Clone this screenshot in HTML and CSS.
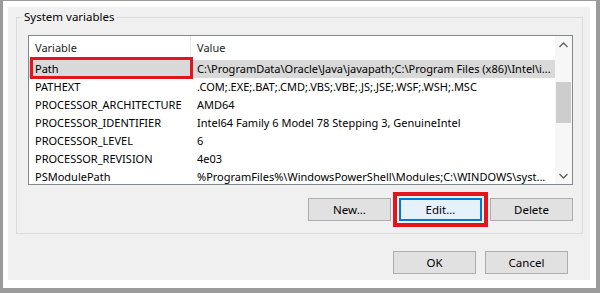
FILE: index.html
```html
<!DOCTYPE html>
<html>
  <head>
    <title>Environment Variables</title>
    <link rel="stylesheet" href="styles.css">
  </head>
  <body>
    <div class="frame">
      <div class="dialog">
        <fieldset class="group">
          <legend>System variables</legend>
          <div class="listbox">
            <div class="list">
              <div class="row head">
                <span class="cell name">Variable</span>
                <span class="cell value">Value</span>
              </div>
              <div class="row selected">
                <span class="cell name marked">Path</span>
                <span class="cell value">C:\ProgramData\Oracle\Java\javapath;C:\Program Files (x86)\Intel\i...</span>
              </div>
              <div class="row">
                <span class="cell name">PATHEXT</span>
                <span class="cell value">.COM;.EXE;.BAT;.CMD;.VBS;.VBE;.JS;.JSE;.WSF;.WSH;.MSC</span>
              </div>
              <div class="row">
                <span class="cell name">PROCESSOR_ARCHITECTURE</span>
                <span class="cell value">AMD64</span>
              </div>
              <div class="row">
                <span class="cell name">PROCESSOR_IDENTIFIER</span>
                <span class="cell value">Intel64 Family 6 Model 78 Stepping 3, GenuineIntel</span>
              </div>
              <div class="row">
                <span class="cell name">PROCESSOR_LEVEL</span>
                <span class="cell value">6</span>
              </div>
              <div class="row">
                <span class="cell name">PROCESSOR_REVISION</span>
                <span class="cell value">4e03</span>
              </div>
              <div class="row">
                <span class="cell name">PSModulePath</span>
                <span class="cell value">%ProgramFiles%\WindowsPowerShell\Modules;C:\WINDOWS\syst...</span>
              </div>
            </div>
            <div class="scrollbar">
              <span class="arrow">
                <svg width="9" height="6" viewBox="0 0 9 6"><path d="M0.5 5 L4.5 1 L8.5 5" fill="none" stroke="#606060" stroke-width="1.3"/></svg>
              </span>
              <span class="track"><span class="thumb"></span></span>
              <span class="arrow">
                <svg width="9" height="6" viewBox="0 0 9 6"><path d="M0.5 1 L4.5 5 L8.5 1" fill="none" stroke="#606060" stroke-width="1.3"/></svg>
              </span>
            </div>
          </div>
          <div class="buttons">
            <button class="btn">New...</button>
            <button class="btn default">Edit...</button>
            <button class="btn">Delete</button>
          </div>
        </fieldset>
        <div class="buttons footer">
          <button class="btn">OK</button>
          <button class="btn">Cancel</button>
        </div>
      </div>
    </div>
  </body>
</html>
```

FILE: styles.css
```css
* {
  box-sizing: border-box;
}

html,
body {
  margin: 0;
  height: 293px;
  overflow: hidden;
}

body {
  background-color: #9b9b9b;
  padding: 1px 4px 5px 3px;
  font-family: "Noto Sans", "Open Sans", sans-serif;
  font-size: 11px;
  color: #000;
}

.frame {
  height: 287px;
  background-color: #fff;
  padding: 6px 6px 8px 5px;
}

.dialog {
  height: 273px;
  background-color: #f0f0f0;
  padding-top: 2px;
}

.group {
  margin: 0 7px 0 8px;
  padding: 10px 9px 12px 11px;
  border: 1px solid #dcdcdc;
  min-width: 0;
}

.group legend {
  margin-left: -6px;
  padding: 0 2px;
  line-height: 16px;
  font-size: 11.5px;
  color: #000;
}

.listbox {
  display: flex;
  height: 150px;
  border: 1px solid #828790;
  background-color: #fff;
  overflow: hidden;
}

.list {
  flex: 1;
  min-width: 0;
}

.row {
  display: flex;
  height: 18px;
  line-height: 18px;
  white-space: nowrap;
}

.row.head {
  height: 24px;
  line-height: 24px;
  color: #1e1e1e;
}

.row.selected {
  background-color: #d9d9d9;
}

.cell {
  overflow: hidden;
}

.cell.name {
  width: 162px;
  flex: none;
  padding-left: 6px;
}

.row.head .cell.name {
  border-right: 1px solid #e5e5e5;
}

.cell.value {
  flex: 1;
  padding-left: 6px;
}

.cell.marked {
  position: relative;
  overflow: visible;
}

.cell.marked::after {
  content: "";
  position: absolute;
  top: -3px;
  bottom: -1px;
  left: 1px;
  right: -2px;
  border: 3px solid #e3141e;
}

.scrollbar {
  width: 17px;
  flex: none;
  display: flex;
  flex-direction: column;
  background-color: #f7f7f7;
}

.scrollbar .arrow {
  height: 17px;
  display: flex;
  align-items: center;
  justify-content: center;
}

.scrollbar .track {
  flex: 1;
  padding: 29px 1px 0;
}

.scrollbar .thumb {
  display: block;
  height: 41px;
  background-color: #cdcdcd;
}

.buttons {
  display: flex;
  justify-content: flex-end;
  gap: 8px;
  margin-top: 13px;
}

.btn {
  width: 83px;
  height: 23px;
  padding: 0;
  font-family: inherit;
  font-size: 11.5px;
  color: #000;
  background-color: #e1e1e1;
  border: 1px solid #adadad;
}

.btn.default {
  background-color: #e5f1fb;
  border: 2px solid #0078d7;
  outline: 4px solid #e3141e;
  outline-offset: 2px;
}

.footer {
  margin-top: 17px;
  padding-right: 22px;
  gap: 9px;
}
```
